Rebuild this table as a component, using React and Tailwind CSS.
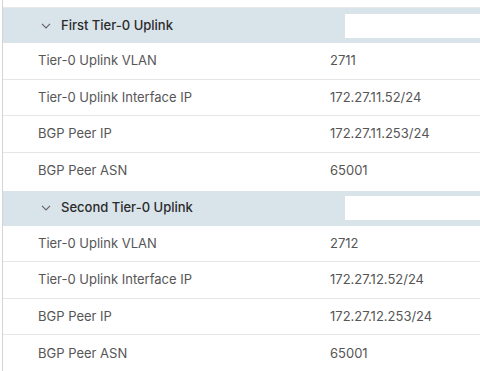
import React from 'react';

const groups = [
  {
    title: 'First Tier-0 Uplink',
    rows: [
      ['Tier-0 Uplink VLAN', '2711'],
      ['Tier-0 Uplink Interface IP', '172.27.11.52/24'],
      ['BGP Peer IP', '172.27.11.253/24'],
      ['BGP Peer ASN', '65001'],
    ],
  },
  {
    title: 'Second Tier-0 Uplink',
    rows: [
      ['Tier-0 Uplink VLAN', '2712'],
      ['Tier-0 Uplink Interface IP', '172.27.12.52/24'],
      ['BGP Peer IP', '172.27.12.253/24'],
      ['BGP Peer ASN', '65001'],
    ],
  },
];

function Chevron() {
  return (
    <svg width="10" height="6" viewBox="0 0 10 6" fill="none" className="shrink-0">
      <path d="M1 0.8 L5 4.8 L9 0.8" stroke="#666666" strokeWidth="1.2" />
    </svg>
  );
}

function Group({ group, first }) {
  return (
    <div className={first ? '' : 'mt-[1.5px]'}>
      <div className="flex h-[35px] items-center bg-[#d9e3ea]">
        <div className="flex w-[342px] items-center gap-[10px] pl-[38px]">
          <Chevron />
          <span className="text-[13px] font-medium text-[#2b2b2b]">{group.title}</span>
        </div>
        <div className="h-[24px] flex-1 bg-white" />
      </div>
      {group.rows.map(([label, value], i) => (
        <div
          key={label}
          className={`flex h-[36.5px] items-center text-[13px] text-[#565656] ${
            i < group.rows.length - 1 ? 'border-b border-[#e6e6e6]' : ''
          }`}
        >
          <div className="w-[327px] pl-[35px]">{label}</div>
          <div>{value}</div>
        </div>
      ))}
    </div>
  );
}

export default function App() {
  return (
    <div
      className="h-[371px] w-[480px] overflow-hidden bg-white"
      style={{ fontFamily: 'Inter, "Noto Sans", sans-serif' }}
    >
      <div className="ml-[2px] h-full border-l border-[#d4d4d4]">
        <div className="h-[8px] border-b border-[#e8e8e8]" />
        {groups.map((g, i) => (
          <Group key={g.title} group={g} first={i === 0} />
        ))}
      </div>
    </div>
  );
}
